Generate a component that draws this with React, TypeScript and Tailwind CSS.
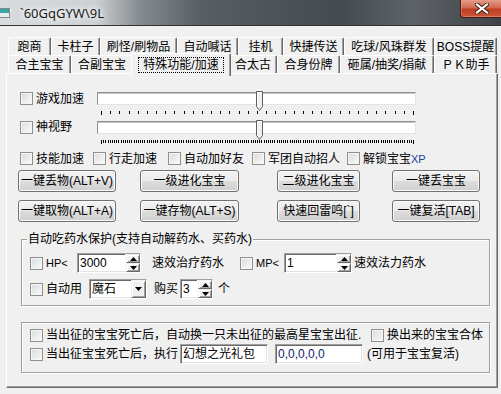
import React from "react";

const sunken =
  "border border-t-[#a0a0a0] border-l-[#a0a0a0] border-r-white border-b-white shadow-[inset_1px_1px_0_#696969,inset_-1px_-1px_0_#e3e3e3]";
const raised =
  "border border-t-[#f0f0f0] border-l-[#f0f0f0] border-r-[#696969] border-b-[#696969] shadow-[inset_1px_1px_0_#ffffff,inset_-1px_-1px_0_#a0a0a0]";

const row1Tabs = [
  { label: "跑商", w: "w-[43px]" },
  { label: "卡柱子", w: "w-[49px]" },
  { label: "刷怪/刷物品", w: "w-[77px]" },
  { label: "自动喊话", w: "w-[61px]" },
  { label: "挂机", w: "w-[45px]" },
  { label: "快捷传送", w: "w-[61px]" },
  { label: "吃球/风珠群发", w: "w-[90px]" },
  { label: "BOSS提醒", w: "w-[63px]" },
];

const row2Tabs = [
  { label: "合主宝宝", w: "w-[63px]" },
  { label: "合副宝宝", w: "w-[62px]" },
  { label: "特殊功能/加速", w: "w-[96px]", selected: true },
  { label: "合太古", w: "w-[48px]" },
  { label: "合身份牌", w: "w-[63px]" },
  { label: "砸属/抽奖/捐献", w: "w-[94px]" },
  { label: "ＰＫ助手", w: "w-[63px]" },
];

function Tab({ label, w, selected }: { label: string; w: string; selected?: boolean }) {
  if (selected) {
    return (
      <div className={`relative h-[18px] shrink-0 ${w}`}>
        <div className="absolute -left-[2px] -right-[2px] -top-[2px] -bottom-[3px] z-10 flex items-start justify-center pt-[3px] bg-[#f0f0f0] border-t border-l border-white border-r border-r-[#696969] shadow-[inset_-1px_0_0_#a0a0a0] rounded-t-[2px]">
          <span className="border border-dotted border-black px-[4px] leading-[14px]">{label}</span>
        </div>
      </div>
    );
  }
  return (
    <div
      className={`h-[18px] shrink-0 ${w} flex items-center justify-center border-t border-l border-white border-r border-r-[#696969] shadow-[inset_-1px_0_0_#a0a0a0] rounded-t-[2px] leading-none`}
    >
      {label}
    </div>
  );
}

function CheckBox() {
  return (
    <span className="inline-block w-[13px] h-[13px] shrink-0 border border-[#8e8f8f] bg-[linear-gradient(135deg,#d9dadb,#fbfbfb)] shadow-[inset_0_0_0_1px_#f6f6f6]" />
  );
}

function Check({ label, w }: { label: React.ReactNode; w?: string }) {
  return (
    <div className={`flex items-center gap-[3px] shrink-0 ${w ?? ""}`}>
      <CheckBox />
      <span className="whitespace-nowrap leading-none">{label}</span>
    </div>
  );
}

function Arrow({ up }: { up?: boolean }) {
  return (
    <svg width="7" height="4" viewBox="0 0 7 4" className="block">
      <path d={up ? "M0 4 L3.5 0 L7 4 Z" : "M0 0 L7 0 L3.5 4 Z"} fill="#000" />
    </svg>
  );
}

function Spin({ value, w }: { value: string; w: string }) {
  return (
    <div className={`flex h-[20px] shrink-0 bg-white ${sunken} ${w}`}>
      <span className="flex-1 pl-[2px] leading-[18px]">{value}</span>
      <div className="w-[15px] flex flex-col border-l border-white">
        <div className={`flex-1 flex items-center justify-center bg-[#f0f0f0] ${raised}`}>
          <Arrow up />
        </div>
        <div className={`flex-1 flex items-center justify-center bg-[#f0f0f0] ${raised}`}>
          <Arrow />
        </div>
      </div>
    </div>
  );
}

function Button({ children, w }: { children: React.ReactNode; w: string }) {
  return (
    <div
      className={`h-[22px] shrink-0 ${w} flex items-center justify-center rounded-[3px] border border-[#707070] bg-[linear-gradient(#f2f2f2_0%,#ebebeb_50%,#dddddd_50%,#cfcfcf_100%)] shadow-[inset_0_0_0_1px_#fbfbfb] whitespace-nowrap leading-none`}
    >
      {children}
    </div>
  );
}

function Slider({ dense }: { dense?: boolean }) {
  const n = dense ? 144 : 34;
  const ticks = Array.from({ length: n + 1 }, (_, i) => Math.round(4 + (i * 312) / n));
  return (
    <div className="relative w-[319px] h-[24px]">
      <div className="mt-[1px] h-[13px] bg-white border border-t-[#8f8f8f] border-l-[#8f8f8f] border-r-[#e3e3e3] border-b-[#e3e3e3] shadow-[inset_0_1px_0_#c6c6c6]" />
      <svg className="absolute left-[159px] top-0" width="8" height="21" viewBox="0 0 8 21">
        <path d="M0.5 0.5 H6.5 V15.5 L3.5 19.5 L0.5 15.5 Z" fill="#f0f0f0" stroke="#5d5d5d" />
        <path d="M1.5 1.5 H5.5 M1.5 1.5 V15" stroke="#ffffff" />
      </svg>
      <svg className="block mt-[6px]" width="319" height="4" viewBox="0 0 319 4">
        {ticks.map((x, i) => (
          <rect key={i} x={x} y={0} width={1} height={i === 0 || i === n ? 4 : 3} fill="#000" />
        ))}
      </svg>
    </div>
  );
}

function CloseIcon() {
  return (
    <svg width="14" height="11" viewBox="0 0 14 11">
      <path d="M2 1.5 L12 9.5 M12 1.5 L2 9.5" stroke="#3a1a12" strokeWidth="4" strokeLinecap="square" />
      <path d="M2 1.5 L12 9.5 M12 1.5 L2 9.5" stroke="#ffffff" strokeWidth="2.2" strokeLinecap="square" />
    </svg>
  );
}

export default function App() {
  return (
    <div className="w-[501px] h-[394px] overflow-hidden bg-[#f0f0f0] text-[12px] text-black font-['Liberation_Sans','Noto_Sans_CJK_SC',sans-serif]">
      {/* title bar */}
      <div className="h-[26px] flex items-start border-b border-[#2e3236] bg-[linear-gradient(90deg,#d9dcde_0%,#cdd1d4_19%,#868b8f_28%,#595e63_40%,#454a4f_68%,#5e6367_82%,#3e4246_100%)]">
        <svg className="mt-[8px] shrink-0" width="12" height="10" viewBox="0 0 12 10">
          <rect x="0" y="0" width="10" height="10" fill="#7b8a90" />
          <rect x="0" y="1" width="9" height="4" fill="#3aa6a0" />
          <rect x="0" y="5" width="9" height="4" fill="#e8eef0" />
          <rect x="10" y="1" width="1" height="3" fill="#fff" />
        </svg>
        <span className="ml-[8px] mt-[5px] text-[13px] leading-[16px] text-[#1b1b1b] font-['Noto_Sans',sans-serif] [text-shadow:0_0_6px_#ffffff,0_0_6px_#ffffff]">
          `60GqGYW\9L
        </span>
        <div className="ml-auto mr-[-3px] w-[44px] h-[18px] flex items-center justify-center rounded-bl-[4px] border border-t-0 border-[#4a1d14] bg-[linear-gradient(#e29a86_0%,#d36a50_45%,#bf3c22_55%,#c9573b_100%)] shadow-[inset_0_0_0_1px_#eaa08c80]">
          <CloseIcon />
        </div>
      </div>

      {/* tabs */}
      <div className="pt-[11px] pl-[8px]">
        <div className="flex">
          {row1Tabs.map((t) => (
            <Tab key={t.label} label={t.label} w={t.w} />
          ))}
        </div>
        <div className="flex">
          {row2Tabs.map((t) => (
            <Tab key={t.label} label={t.label} w={t.w} selected={t.selected} />
          ))}
        </div>
      </div>

      {/* panel */}
      <div className="ml-[6px] w-[492px] h-[315px] border-t border-l border-white border-r border-b border-r-[#696969] border-b-[#696969] shadow-[inset_-1px_-1px_0_#a0a0a0]">
        {/* sliders */}
        <div className="mt-[17px] ml-[13px] flex">
          <div className="w-[77px] h-[15px] flex items-center">
            <Check label="游戏加速" />
          </div>
          <Slider />
        </div>
        <div className="mt-[5px] ml-[13px] flex">
          <div className="w-[77px] h-[14px] flex items-center">
            <Check label="神视野" />
          </div>
          <Slider dense />
        </div>

        {/* options */}
        <div className="mt-[8px] ml-[13px] h-[13px] flex items-center">
          <Check label="技能加速" w="w-[73px]" />
          <Check label="行走加速" w="w-[75px]" />
          <Check label="自动加好友" w="w-[84px]" />
          <Check label="军团自动招人" w="w-[95px]" />
          <Check
            label={
              <>
                解锁宝宝<span className="text-[11px] text-[#1f3c9a]">XP</span>
              </>
            }
          />
        </div>

        {/* buttons */}
        <div className="mt-[5px] ml-[11px] flex">
          <Button w="w-[98px]">一键丢物(ALT+V)</Button>
          <div className="ml-[24px]"><Button w="w-[99px]">一级进化宝宝</Button></div>
          <div className="ml-[38px]"><Button w="w-[83px]">二级进化宝宝</Button></div>
          <div className="ml-[32px]"><Button w="w-[88px]">一键丢宝宝</Button></div>
        </div>
        <div className="mt-[8px] ml-[11px] flex">
          <Button w="w-[98px]">一键取物(ALT+A)</Button>
          <div className="ml-[24px]"><Button w="w-[99px]">一键存物(ALT+S)</Button></div>
          <div className="ml-[38px]"><Button w="w-[83px]">快速回雷鸣[`]</Button></div>
          <div className="ml-[32px]"><Button w="w-[88px]">一键复活[TAB]</Button></div>
        </div>

        {/* potion group */}
        <div className="relative mt-[17px] ml-[14px] w-[469px] h-[67px] border border-[#a0a0a0] shadow-[inset_1px_1px_0_#ffffff,1px_1px_0_#ffffff]">
          <span className="absolute -top-[8px] left-[5px] px-[1px] bg-[#f0f0f0] leading-[14px] whitespace-nowrap">
            自动吃药水保护(支持自动解药水、买药水)
          </span>
          <div className="mt-[13px] ml-[8px] flex items-center h-[20px]">
            <CheckBox />
            <span className="ml-[3px] w-[31px] text-[11px] leading-none">HP&lt;</span>
            <Spin value="3000" w="w-[64px]" />
            <span className="ml-[11px] w-[88px] leading-none">速效治疗药水</span>
            <CheckBox />
            <span className="ml-[3px] w-[28px] text-[11px] leading-none">MP&lt;</span>
            <Spin value="1" w="w-[68px]" />
            <span className="ml-[2px] leading-none">速效法力药水</span>
          </div>
          <div className="mt-[6px] ml-[8px] flex items-center h-[20px]">
            <CheckBox />
            <span className="ml-[3px] w-[43px] leading-none">自动用</span>
            <div className={`flex h-[20px] w-[58px] bg-white ${sunken}`}>
              <span className="flex-1 pl-[2px] leading-[18px]">魔石</span>
              <div className={`w-[15px] flex items-center justify-center bg-[#f0f0f0] ${raised}`}>
                <Arrow />
              </div>
            </div>
            <span className="ml-[7px] w-[26px] leading-none">购买</span>
            <Spin value="3" w="w-[33px]" />
            <span className="ml-[5px] leading-none">个</span>
          </div>
        </div>

        {/* pet group */}
        <div className="mt-[16px] ml-[14px] w-[469px] h-[51px] border border-[#a0a0a0] shadow-[inset_1px_1px_0_#ffffff,1px_1px_0_#ffffff]">
          <div className="mt-[5px] ml-[8px] h-[14px] flex items-center">
            <CheckBox />
            <span className="ml-[3px] w-[325px] leading-none whitespace-nowrap">
              当出征的宝宝死亡后，自动换一只未出征的最高星宝宝出征.
            </span>
            <CheckBox />
            <span className="ml-[3px] leading-none whitespace-nowrap">换出来的宝宝合体</span>
          </div>
          <div className="mt-[2px] ml-[8px] h-[20px] flex items-center">
            <CheckBox />
            <span className="ml-[3px] w-[134px] leading-none whitespace-nowrap">当出征宝宝死亡后，执行</span>
            <div className={`h-[20px] w-[88px] bg-white ${sunken} pl-[2px] leading-[18px] whitespace-nowrap`}>
              幻想之光礼包
            </div>
            <div className={`ml-[7px] h-[20px] w-[88px] bg-white ${sunken} pl-[2px] leading-[18px] text-[#10206a]`}>
              0,0,0,0,0
            </div>
            <span className="ml-[4px] leading-none whitespace-nowrap">(可用于宝宝复活)</span>
          </div>
        </div>
      </div>
    </div>
  );
}
